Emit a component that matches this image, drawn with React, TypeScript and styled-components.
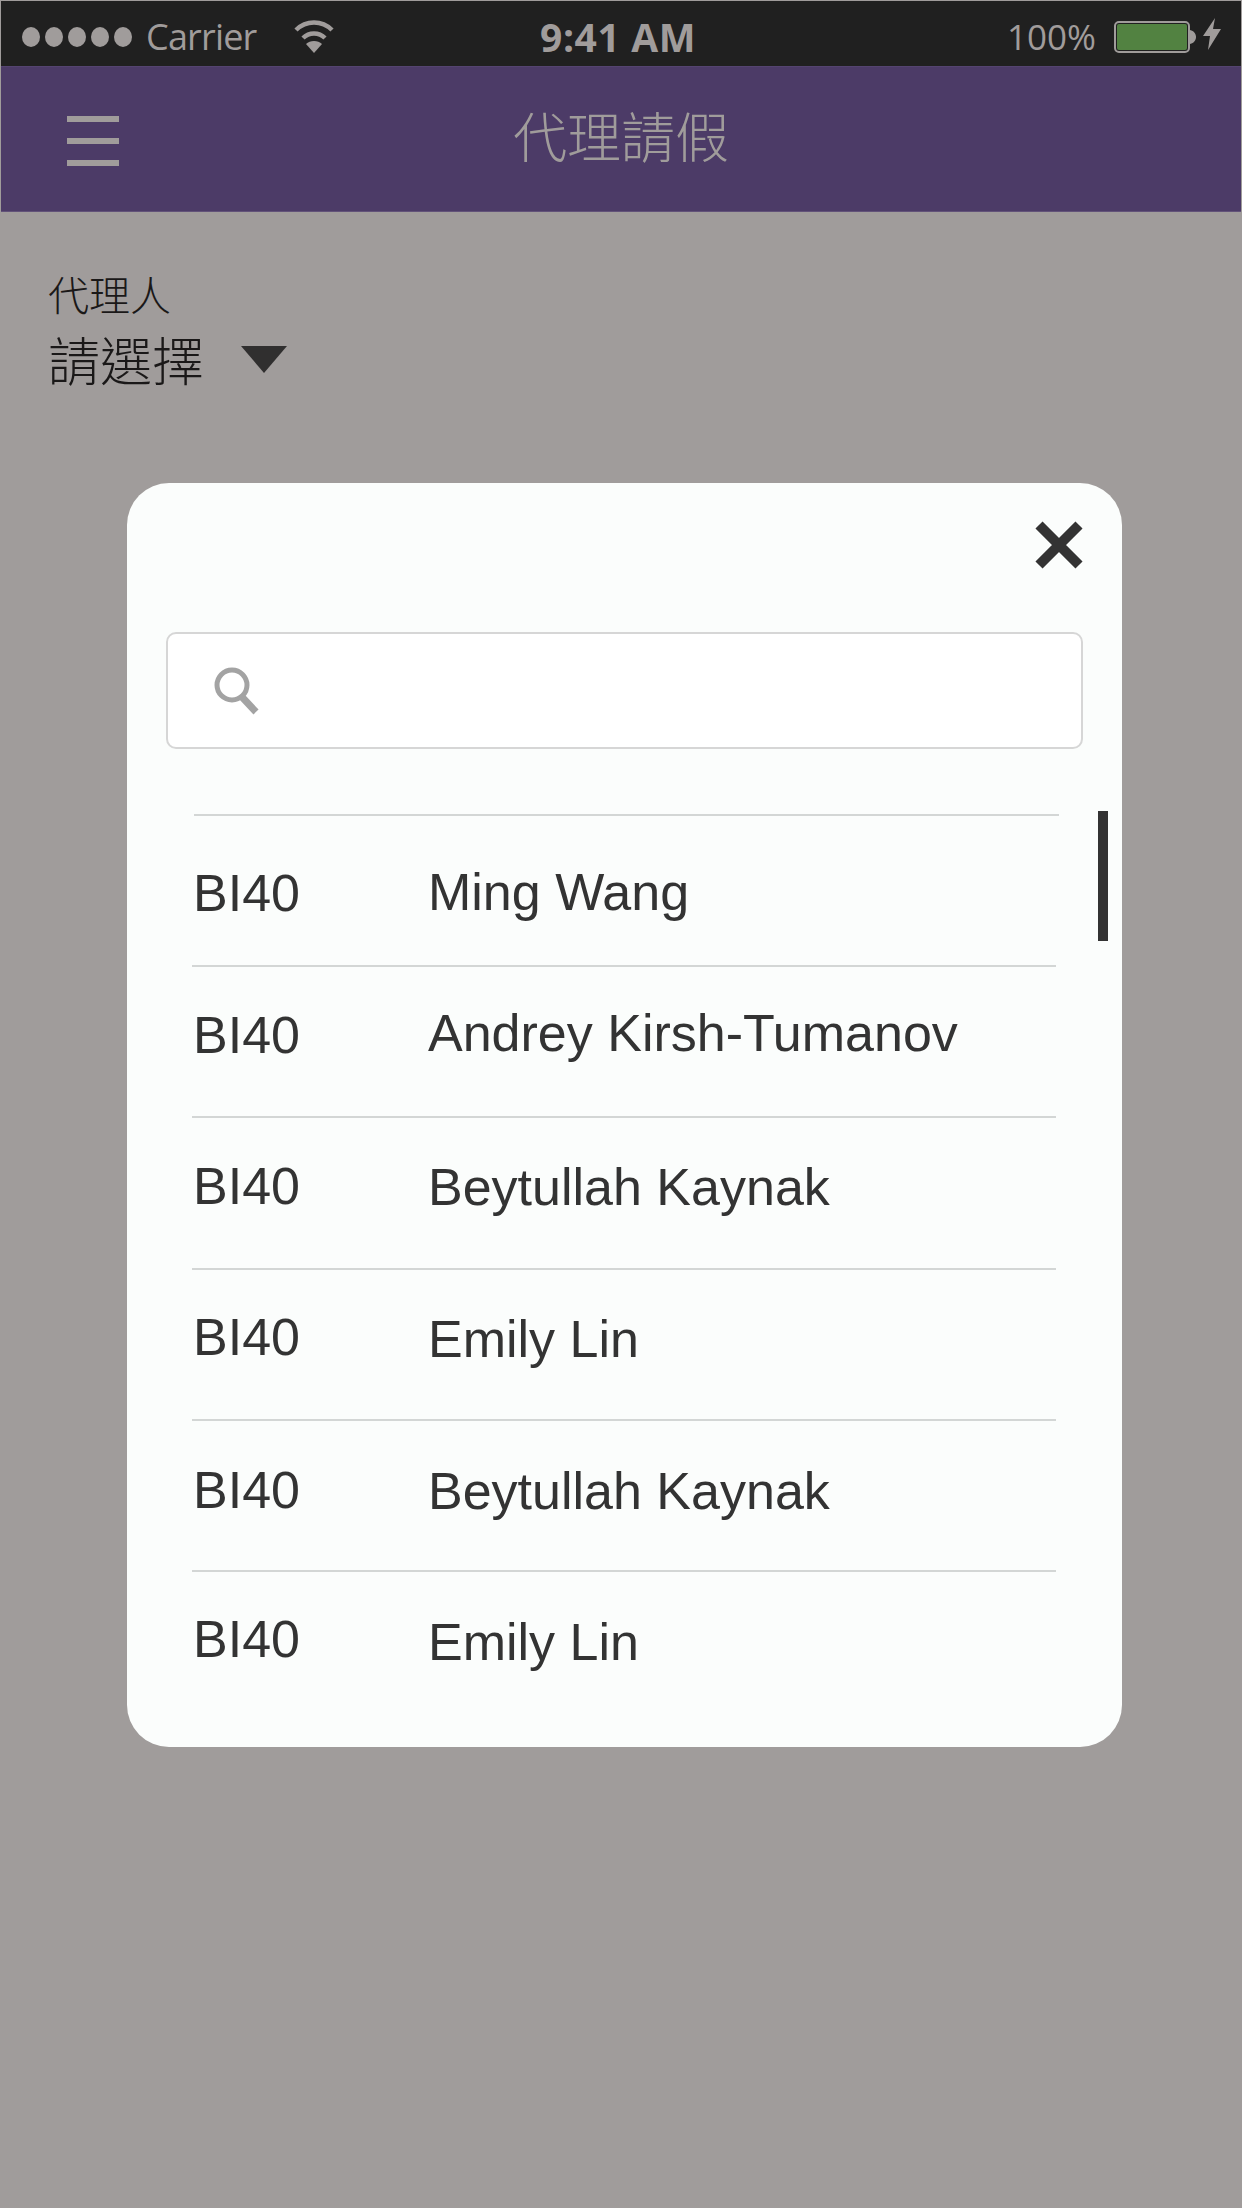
import React from "react";
import styled, { createGlobalStyle } from "styled-components";

const GlobalStyle = createGlobalStyle`
  html, body { margin: 0; padding: 0; background: #a09c9b; }
  * { box-sizing: border-box; }
`;

const CJK = `"Noto Sans CJK TC", "Noto Sans CJK SC", sans-serif`;

const Page = styled.div`
  position: relative;
  width: 1242px;
  height: 2208px;
  padding: 1px 1px 0;
  overflow: hidden;
  background: #a09c9b;
`;

const StatusBar = styled.div`
  position: relative;
  display: flex;
  align-items: center;
  height: 65px;
  padding: 6px 20px 0 21px;
  background: #202020;
  color: #a09c9b;
  font-family: "Open Sans", sans-serif;
  font-size: 36px;
`;

const Dots = styled.div`
  display: flex;
  gap: 5px;
  margin-right: 14px;
`;

const Dot = styled.span`
  width: 18px;
  height: 20px;
  border-radius: 50%;
  background: #a09c9b;
`;

const Carrier = styled.span`
  width: 148px;
  letter-spacing: -0.8px;
`;

const Clock = styled.span`
  position: absolute;
  left: 539px;
  font-weight: 700;
  font-size: 39px;
  letter-spacing: 0.6px;
`;

const StatusRight = styled.div`
  display: flex;
  align-items: center;
  margin-left: auto;
`;

const Percent = styled.span`
  margin-right: 18px;
  font-size: 35px;
`;

const Battery = styled.div`
  display: flex;
  width: 76px;
  height: 32px;
  padding: 1px;
  border: 2px solid #a09c9b;
  border-radius: 5px;
  background: #202020;
`;

const BatteryFill = styled.div`
  flex: 1;
  border-radius: 2px;
  background: #528241;
`;

const Header = styled.header`
  position: relative;
  display: flex;
  align-items: center;
  justify-content: center;
  height: 146px;
  padding-bottom: 8px;
  background: #4c3b67;
  border-top: 1px solid #544470;
  border-bottom: 1px solid #625279;
`;

const MenuIcon = styled.div`
  position: absolute;
  left: 66px;
  top: 49px;
  display: flex;
  flex-direction: column;
  gap: 16px;
  width: 52px;
`;

const MenuBar = styled.span`
  height: 6px;
  background: #a09c9b;
`;

const Title = styled.h1`
  margin: 0;
  color: #a09c9b;
  font-family: ${CJK};
  font-weight: 300;
  font-size: 54px;
  line-height: 1;
`;

const Form = styled.section`
  padding: 57px 47px 0;
  color: #1a1818;
  font-family: ${CJK};
`;

const FieldLabel = styled.div`
  font-size: 41px;
  font-weight: 300;
  line-height: 48px;
`;

const Select = styled.div`
  display: flex;
  align-items: center;
  gap: 37px;
  margin-top: 11px;
  font-size: 52px;
  font-weight: 300;
  line-height: 62px;
`;

const Caret = styled.span`
  width: 0;
  height: 0;
  border-left: 23px solid transparent;
  border-right: 23px solid transparent;
  border-top: 27px solid #302f2f;
`;

const Modal = styled.div`
  position: absolute;
  left: 127px;
  top: 483px;
  display: flex;
  flex-direction: column;
  width: 995px;
  height: 1264px;
  padding: 38px 39px 0;
  border-radius: 42px;
  background: #fbfdfc;
  font-family: "Liberation Sans", Arial, sans-serif;
  color: #333;
`;

const CloseRow = styled.div`
  display: flex;
  justify-content: flex-end;
  height: 111px;
`;

const SearchBox = styled.div`
  display: flex;
  align-items: center;
  height: 117px;
  padding-left: 46px;
  border: 2px solid #d6d6d6;
  border-radius: 10px;
  background: #fff;
`;

const List = styled.ul`
  list-style: none;
  margin: 65px 0 0;
  padding: 0;
`;

const Row = styled.li<{ $first?: boolean }>`
  display: flex;
  align-items: flex-start;
  height: 151.2px;
  margin-left: ${(p) => (p.$first ? 28 : 26)}px;
  margin-right: ${(p) => (p.$first ? 24 : 27)}px;
  border-top: 2px solid #d3d6d5;
  font-size: 52px;
`;

const Code = styled.span<{ $top: number; $first?: boolean }>`
  width: 235px;
  margin-left: ${(p) => (p.$first ? -1 : 1)}px;
  padding-top: ${(p) => p.$top}px;
`;

const Name = styled.span<{ $top: number }>`
  padding-top: ${(p) => p.$top}px;
`;

const ScrollThumb = styled.div`
  position: absolute;
  left: 971px;
  top: 328px;
  width: 10px;
  height: 130px;
  background: #333;
`;

const people = [
  { name: "Ming Wang", codeTop: 47, nameTop: 46 },
  { name: "Andrey Kirsh-Tumanov", codeTop: 38, nameTop: 36 },
  { name: "Beytullah Kaynak", codeTop: 38, nameTop: 39 },
  { name: "Emily Lin", codeTop: 37, nameTop: 39 },
  { name: "Beytullah Kaynak", codeTop: 39, nameTop: 40 },
  { name: "Emily Lin", codeTop: 37, nameTop: 40 },
];

export default function App() {
  return (
    <Page>
      <GlobalStyle />
      <StatusBar>
        <Dots>
          {[0, 1, 2, 3, 4].map((i) => (
            <Dot key={i} />
          ))}
        </Dots>
        <Carrier>Carrier</Carrier>
        <svg width="40" height="34" viewBox="0 0 40 34" fill="none" stroke="#a09c9b" strokeWidth="4.5">
          <path d="M2 10 C12 0 28 0 38 10" />
          <path d="M9 18 C15 12 25 12 31 18" />
          <path d="M12 24 L20 33 L28 24 C24 20 16 20 12 24Z" fill="#a09c9b" stroke="none" />
        </svg>
        <Clock>9:41 AM</Clock>
        <StatusRight>
          <Percent>100%</Percent>
          <Battery>
            <BatteryFill />
          </Battery>
          <svg width="6" height="14" viewBox="0 0 6 14">
            <path d="M0 0 C4 1 6 4 6 7 C6 10 4 13 0 14Z" fill="#a09c9b" />
          </svg>
          <svg width="18" height="32" viewBox="0 0 18 32" style={{ marginLeft: 7, marginTop: -5 }}>
            <path d="M12 0 L0 18 L7 18 L5 32 L18 11 L10 11 Z" fill="#a09c9b" />
          </svg>
        </StatusRight>
      </StatusBar>
      <Header>
        <MenuIcon>
          <MenuBar />
          <MenuBar />
          <MenuBar />
        </MenuIcon>
        <Title>代理請假</Title>
      </Header>
      <Form>
        <FieldLabel>代理人</FieldLabel>
        <Select>
          請選擇
          <Caret />
        </Select>
      </Form>
      <Modal>
        <CloseRow>
          <svg width="48" height="48" viewBox="0 0 48 48">
            <path d="M4 4 L44 44 M44 4 L4 44" stroke="#333" strokeWidth="10" fill="none" />
          </svg>
        </CloseRow>
        <SearchBox>
          <svg width="46" height="48" viewBox="0 0 46 48" fill="none">
            <circle cx="18" cy="18" r="15" stroke="#a3a3a3" strokeWidth="5" />
            <path d="M28 30 L42 45" stroke="#a3a3a3" strokeWidth="7" />
          </svg>
        </SearchBox>
        <List>
          {people.map((p, i) => (
            <Row key={i} $first={i === 0}>
              <Code $top={p.codeTop} $first={i === 0}>BI40</Code>
              <Name $top={p.nameTop}>{p.name}</Name>
            </Row>
          ))}
        </List>
        <ScrollThumb />
      </Modal>
    </Page>
  );
}
